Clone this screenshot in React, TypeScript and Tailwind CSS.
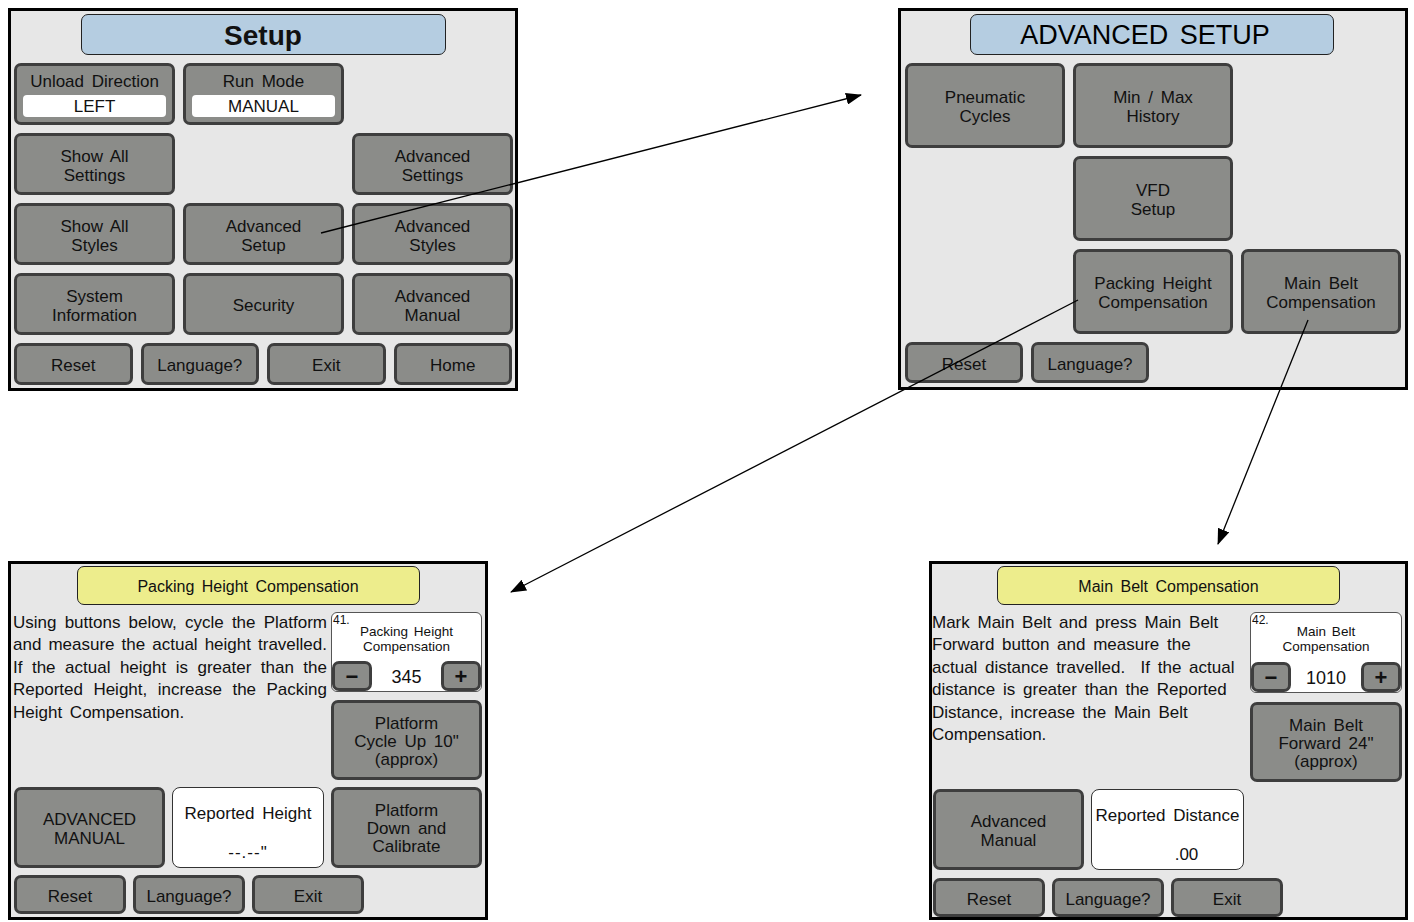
import React from "react";

const btnBase =
  "flex flex-col items-center justify-center rounded-[7px] border-[3px] border-[#3e3e3e] bg-[#8b8c89] pt-[3px] text-center text-[17px] leading-[19px] text-[#111] [word-spacing:3px]";

function Btn({ children, className = "" }: { children?: React.ReactNode; className?: string }) {
  return <div className={`${btnBase} ${className}`}>{children}</div>;
}

function Field({ children }: { children: React.ReactNode }) {
  return (
    <div className="mt-[4px] h-[22px] w-[143px] rounded-[4px] bg-white pt-[2px] leading-[20px]">{children}</div>
  );
}

function Stepper({ num, title, value }: { num: string; title: React.ReactNode; value: string }) {
  return (
    <div className="relative flex h-full flex-col rounded-[6px] border border-[#555] bg-white">
      <span className="absolute left-[1px] top-0 text-[12px] leading-[14px]">{num}</span>
      <div className="pt-[11px] text-center text-[13.5px] leading-[15px] [word-spacing:2px]">{title}</div>
      <div className="mt-auto flex items-center justify-between">
        <Btn className="h-[30px] w-[40px] !pt-0 !text-[22px] font-bold">−</Btn>
        <span className="pt-[2px] text-[18px]">{value}</span>
        <Btn className="h-[30px] w-[40px] !pt-0 !text-[22px] font-bold">+</Btn>
      </div>
    </div>
  );
}

function Readout({ label, value, valueClass = "" }: { label: string; value: string; valueClass?: string }) {
  return (
    <div className="flex h-full flex-col items-center rounded-[8px] border border-[#333] bg-white pt-[16px] text-[17px] leading-[19px] [word-spacing:3px]">
      <span>{label}</span>
      <span className={`mt-auto pb-[5px] ${valueClass}`}>{value}</span>
    </div>
  );
}

function SetupPanel() {
  return (
    <div className="h-[383px] w-[510px] border-[3px] border-black bg-[#e7e7e7] px-[3px] pt-[3px]">
      <div className="mx-auto flex h-[41px] w-[365px] items-center justify-center rounded-[7px] border border-[#222] bg-[#b5cde1] pt-[2px] text-[28px] font-bold">
        Setup
      </div>
      <div className="mt-[8px] grid grid-cols-[161px_161px_161px] grid-rows-[62px_62px_62px_62px] gap-[8px]">
        <Btn className="col-start-1 row-start-1 !justify-start !pt-[6px]">
          <span>Unload Direction</span>
          <Field>LEFT</Field>
        </Btn>
        <Btn className="col-start-2 row-start-1 !justify-start !pt-[6px]">
          <span>Run Mode</span>
          <Field>MANUAL</Field>
        </Btn>
        <Btn className="col-start-1 row-start-2">Show All<br />Settings</Btn>
        <Btn className="col-start-3 row-start-2">Advanced<br />Settings</Btn>
        <Btn className="col-start-1 row-start-3">Show All<br />Styles</Btn>
        <Btn className="col-start-2 row-start-3">Advanced<br />Setup</Btn>
        <Btn className="col-start-3 row-start-3">Advanced<br />Styles</Btn>
        <Btn className="col-start-1 row-start-4">System<br />Information</Btn>
        <Btn className="col-start-2 row-start-4">Security</Btn>
        <Btn className="col-start-3 row-start-4">Advanced<br />Manual</Btn>
      </div>
      <div className="mt-[8px] grid h-[42px] w-[498px] grid-cols-4 gap-[8px]">
        <Btn>Reset</Btn>
        <Btn>Language?</Btn>
        <Btn>Exit</Btn>
        <Btn>Home</Btn>
      </div>
    </div>
  );
}

function AdvancedPanel() {
  return (
    <div className="h-[382px] w-[510px] border-[3px] border-black bg-[#e7e7e7] pl-[4px] pt-[3px]">
      <div className="ml-[65px] flex h-[41px] w-[364px] items-center justify-center rounded-[7px] border border-[#222] bg-[#b5cde1] pr-[14px] pt-[2px] text-[27px] text-black [word-spacing:4px]">
        ADVANCED SETUP
      </div>
      <div className="mt-[8px] grid grid-cols-[160px_160px_160px] grid-rows-[85px_85px_85px] gap-[8px]">
        <Btn className="col-start-1 row-start-1">Pneumatic<br />Cycles</Btn>
        <Btn className="col-start-2 row-start-1">Min / Max<br />History</Btn>
        <Btn className="col-start-2 row-start-2">VFD<br />Setup</Btn>
        <Btn className="col-start-2 row-start-3">Packing Height<br />Compensation</Btn>
        <Btn className="col-start-3 row-start-3">Main Belt<br />Compensation</Btn>
      </div>
      <div className="mt-[8px] flex h-[41px] gap-[8px]">
        <Btn className="w-[118px]">Reset</Btn>
        <Btn className="w-[118px]">Language?</Btn>
      </div>
    </div>
  );
}

function YellowTitle({ children }: { children: React.ReactNode }) {
  return (
    <div className="mx-auto flex h-[39px] w-[343px] items-center justify-center rounded-[7px] border border-[#222] bg-[#eded8c] pt-[3px] text-[16px] [word-spacing:3px]">
      {children}
    </div>
  );
}

const packingLines = [
  "Using buttons below, cycle the Platform",
  "and measure the actual height travelled.",
  "If the actual height is greater than the",
  "Reported Height, increase the Packing",
];

function PackingPanel() {
  return (
    <div className="h-[359px] w-[480px] border-[3px] border-black bg-[#e7e7e7] pt-[2px]">
      <YellowTitle>Packing Height Compensation</YellowTitle>
      <div className="mt-[7px] flex gap-[4px] pl-[2px]">
        <div className="w-[314px] text-[17px] leading-[22.4px] text-[#111]">
          {packingLines.map((l) => (
            <div key={l} className="whitespace-nowrap text-justify [text-align-last:justify]">
              {l}
            </div>
          ))}
          <div className="[word-spacing:3px]">Height Compensation.</div>
        </div>
        <div className="flex w-[151px] flex-col gap-[8px]">
          <div className="h-[80px]">
            <Stepper num="41." title={<>Packing Height<br />Compensation</>} value="345" />
          </div>
          <Btn className="h-[80px] !leading-[18px]">Platform<br />Cycle Up 10"<br />(approx)</Btn>
        </div>
      </div>
      <div className="mt-[7px] flex h-[81px] gap-[7px] pl-[3px]">
        <Btn className="w-[151px] [word-spacing:0px]">ADVANCED<br />MANUAL</Btn>
        <div className="w-[152px]">
          <Readout label="Reported Height" value={'--.--"'} valueClass="tracking-[1px]" />
        </div>
        <Btn className="w-[151px] !leading-[18px]">Platform<br />Down and<br />Calibrate</Btn>
      </div>
      <div className="mt-[7px] flex h-[39px] gap-[7px] pl-[3px]">
        <Btn className="w-[112px]">Reset</Btn>
        <Btn className="w-[112px]">Language?</Btn>
        <Btn className="w-[112px]">Exit</Btn>
      </div>
    </div>
  );
}

const beltLines = [
  "Mark Main Belt and press Main Belt",
  "Forward button and measure the",
  "actual distance travelled.  If the actual",
  "distance is greater than the Reported",
  "Distance, increase the Main Belt",
  "Compensation.",
];

function BeltPanel() {
  return (
    <div className="h-[359px] w-[479px] border-[3px] border-black bg-[#e7e7e7] pt-[2px]">
      <YellowTitle>Main Belt Compensation</YellowTitle>
      <div className="mt-[7px] flex">
        <div className="w-[318px] text-[17px] leading-[22.4px] text-[#111] [word-spacing:3px]">
          {beltLines.map((l) => (
            <div key={l} className="whitespace-pre">
              {l}
            </div>
          ))}
        </div>
        <div className="flex w-[152px] flex-col gap-[9px]">
          <div className="h-[81px]">
            <Stepper num="42." title={<>Main Belt<br />Compensation</>} value="1010" />
          </div>
          <Btn className="h-[80px] !leading-[18px]">Main Belt<br />Forward 24"<br />(approx)</Btn>
        </div>
      </div>
      <div className="mt-[7px] flex h-[81px] gap-[7px] pl-[1px]">
        <Btn className="w-[151px]">Advanced<br />Manual</Btn>
        <div className="w-[153px]">
          <Readout label="Reported Distance" value=".00" valueClass="pl-[38px]" />
        </div>
      </div>
      <div className="mt-[8px] flex h-[39px] gap-[7px] pl-[1px]">
        <Btn className="w-[112px]">Reset</Btn>
        <Btn className="w-[112px]">Language?</Btn>
        <Btn className="w-[112px]">Exit</Btn>
      </div>
    </div>
  );
}

export default function App() {
  return (
    <div className="relative h-[922px] w-[1414px] overflow-hidden bg-white font-['Liberation_Sans',Arial,sans-serif] text-[#111]">
      <div className="flex justify-between pl-[8px] pr-[6px] pt-[8px]">
        <SetupPanel />
        <AdvancedPanel />
      </div>
      <div className="mt-[170px] flex justify-between pl-[8px] pr-[6px]">
        <PackingPanel />
        <BeltPanel />
      </div>
      {/* flow arrows between the screens */}
      <svg className="pointer-events-none absolute inset-0" width="1414" height="922">
        <defs>
          <marker id="head" viewBox="0 0 16 12" refX="15" refY="6" markerWidth="16" markerHeight="12" markerUnits="userSpaceOnUse" orient="auto">
            <path d="M0,0 L16,6 L0,12 z" fill="#000" />
          </marker>
        </defs>
        <line x1="321" y1="233" x2="861" y2="95" stroke="#000" strokeWidth="1.3" markerEnd="url(#head)" />
        <line x1="1078" y1="300" x2="511" y2="592" stroke="#000" strokeWidth="1.3" markerEnd="url(#head)" />
        <line x1="1308" y1="320" x2="1218" y2="544" stroke="#000" strokeWidth="1.3" markerEnd="url(#head)" />
      </svg>
    </div>
  );
}
